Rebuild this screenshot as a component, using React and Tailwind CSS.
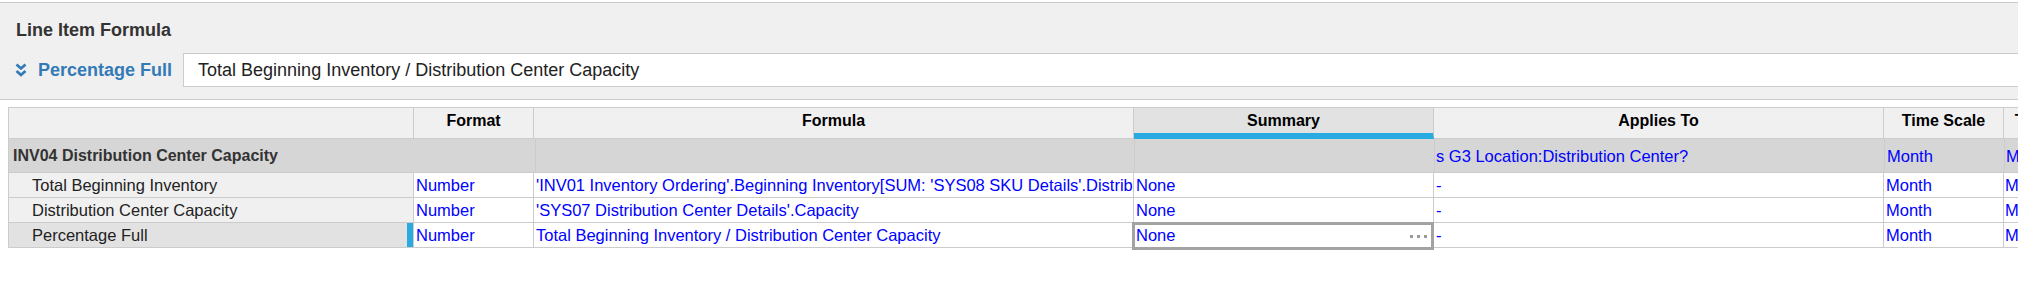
import React from 'react';

const rows = [
  {
    label: 'Total Beginning Inventory',
    format: 'Number',
    formula: "'INV01 Inventory Ordering'.Beginning Inventory[SUM: 'SYS08 SKU Details'.Distribution Center]",
    summary: 'None',
    applies: '-',
    time: 'Month',
  },
  {
    label: 'Distribution Center Capacity',
    format: 'Number',
    formula: "'SYS07 Distribution Center Details'.Capacity",
    summary: 'None',
    applies: '-',
    time: 'Month',
  },
  {
    label: 'Percentage Full',
    format: 'Number',
    formula: 'Total Beginning Inventory / Distribution Center Capacity',
    summary: 'None',
    applies: '-',
    time: 'Month',
    selected: true,
  },
];

const cell = 'border-r border-b border-[#cccccc] overflow-hidden whitespace-nowrap shrink-0';

const DoubleChevron = () => (
  <svg width="12" height="14" viewBox="0 0 12 14" fill="none" stroke="#337ab7" strokeWidth="2.8">
    <path d="M1.5 1.5 L6 5.5 L10.5 1.5" />
    <path d="M1.5 8 L6 12 L10.5 8" />
  </svg>
);

const App = () => {
  return (
    <div className="w-[2018px] h-[297px] bg-white overflow-hidden font-['Liberation_Sans',Arial,sans-serif]">
      {/* formula editor bar */}
      <div className="mt-[2px] h-[98px] border-y border-[#cccccc] bg-[#f0f0f0]">
        <div className="pl-4 pt-[17px] text-[18px] leading-[20px] font-bold text-[#333333]">Line Item Formula</div>
        <div className="flex items-center mt-[13px]">
          <div className="ml-[15px] w-[12px] flex">
            <DoubleChevron />
          </div>
          <span className="ml-[11px] text-[18px] font-bold text-[#337ab7]">Percentage Full</span>
          <div className="ml-[11px] flex-1 h-[34px] border border-r-0 border-[#cccccc] bg-white flex items-center pl-[14px] text-[18px] text-[#222222]">
            Total Beginning Inventory / Distribution Center Capacity
          </div>
        </div>
      </div>

      {/* grid */}
      <div className="mt-[7px] ml-2 border-l border-t border-[#cccccc] w-[2150px] text-[16.5px]">
        <div className="flex h-[31px] bg-[#f0f0f0] font-bold text-black text-[16px] leading-[20px]">
          <div className={`${cell} w-[405px]`}></div>
          <div className={`${cell} w-[120px] text-center pt-[3px]`}>Format</div>
          <div className={`${cell} w-[600px] text-center pt-[3px]`}>Formula</div>
          <div className={`${cell} w-[300px] text-center pt-[3px] bg-[#e2e2e2] border-b-[6px] border-b-[#29abe2]`}>Summary</div>
          <div className={`${cell} w-[450px] text-center pt-[3px]`}>Applies To</div>
          <div className={`${cell} w-[120px] text-center pt-[3px]`}>Time Scale</div>
          <div className={`${cell} w-[113px] text-center pt-[3px]`}>Time Range</div>
        </div>

        <div className="flex h-[34px] bg-[#d6d6d6] leading-[20px] text-[#0000ff]">
          <div className="border-b border-[#cccccc] w-[526px] shrink-0 flex items-center pl-[4px] font-bold text-[16px] text-[#333333] whitespace-nowrap">
            INV04 Distribution Center Capacity
          </div>
          <div className={`${cell} w-[600px] border-l`}></div>
          <div className={`${cell} w-[300px]`}></div>
          <div className={`${cell} w-[450px] flex items-center pl-[1px]`}>s G3 Location:Distribution Center?</div>
          <div className={`${cell} w-[120px] flex items-center pl-[2px]`}>Month</div>
          <div className={`${cell} w-[113px] flex items-center pl-[1px]`}>Month</div>
        </div>

        {rows.map((r, i) => (
          <div key={i} className="flex h-[25px] leading-[24px] text-[#0000ff]">
            <div className={`${cell} w-[405px] flex justify-between text-[#222222] ${r.selected ? 'bg-[#e2e2e2]' : 'bg-[#f0f0f0]'}`}>
              <span className="pl-[23px]">{r.label}</span>
              {r.selected && <div className="w-[6px] h-full bg-[#29abe2]"></div>}
            </div>
            <div className={`${cell} w-[120px] bg-white pl-[2px]`}>{r.format}</div>
            <div className={`${cell} w-[600px] bg-white pl-[2px]`}>{r.formula}</div>
            <div className={`${cell} w-[300px] bg-white pl-[2px] relative flex items-center !overflow-visible`}>
              <span>{r.summary}</span>
              {r.selected && (
                <>
                  <div className="ml-auto mr-[6px] mt-[3px] flex gap-[4px]">
                    <div className="w-[3px] h-[3px] bg-[#999999]"></div>
                    <div className="w-[3px] h-[3px] bg-[#999999]"></div>
                    <div className="w-[3px] h-[3px] bg-[#999999]"></div>
                  </div>
                  <div className="absolute -left-[2px] -top-[1px] -right-[1px] -bottom-[3px] border-[3px] border-[#a3a3a3]"></div>
                </>
              )}
            </div>
            <div className={`${cell} w-[450px] bg-white pl-[2px]`}>{r.applies}</div>
            <div className={`${cell} w-[120px] bg-white pl-[2px]`}>{r.time}</div>
            <div className={`${cell} w-[113px] bg-white pl-[1px]`}>{r.time}</div>
          </div>
        ))}
      </div>
    </div>
  );
};

export default App;
